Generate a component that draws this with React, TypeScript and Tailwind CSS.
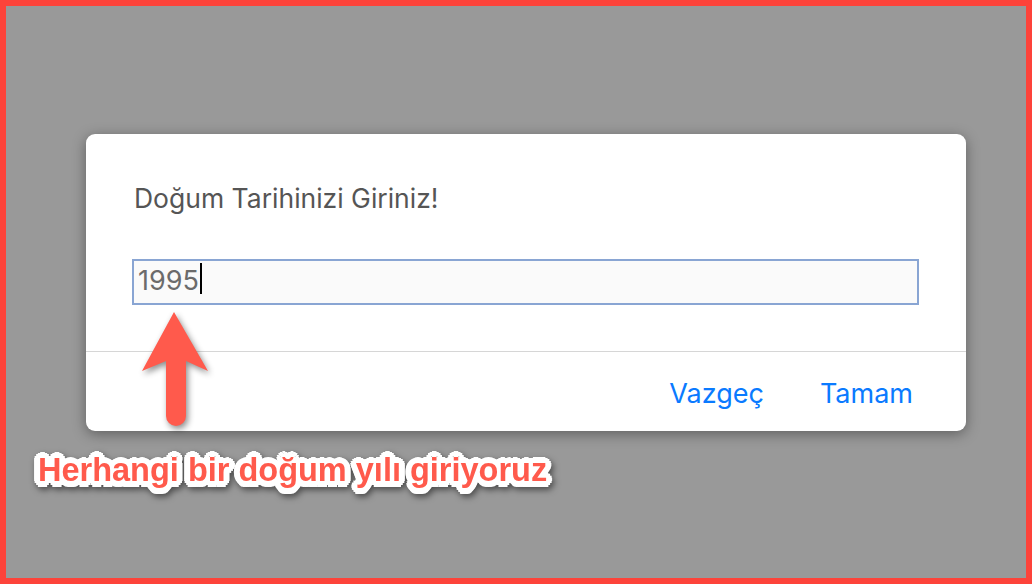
import React from "react";

const Arrow = () => (
  <svg
    className="absolute left-[-6px] top-[-6px] drop-shadow-[2px_3px_3px_rgba(0,0,0,0.45)]"
    width="1032"
    height="584"
    viewBox="0 0 1032 584"
  >
    <path
      d="M174 312 L208 371 L186 361 L186 416 A10 10 0 0 1 166 416 L166 361 L142 371 Z"
      fill="#ff5a4c"
      strokeLinejoin="round"
    />
  </svg>
);

// white rounded outline round the caption, built from text shadows
const outline =
  "[text-shadow:6px_0_0_#fff,-6px_0_0_#fff,0_6px_0_#fff,0_-6px_0_#fff,4px_4px_0_#fff,-4px_4px_0_#fff,4px_-4px_0_#fff,-4px_-4px_0_#fff,5.5px_2.3px_0_#fff,-5.5px_2.3px_0_#fff,5.5px_-2.3px_0_#fff,-5.5px_-2.3px_0_#fff,2.3px_5.5px_0_#fff,-2.3px_5.5px_0_#fff,2.3px_-5.5px_0_#fff,-2.3px_-5.5px_0_#fff,3px_0_0_#fff,-3px_0_0_#fff,0_3px_0_#fff,0_-3px_0_#fff]";

export default function App() {
  return (
    <div className="relative w-[1032px] h-[584px] border-[6px] border-[#fd433a] bg-[#999999] pl-[80px] pt-[128px] font-['Inter',sans-serif]">
      <div className="w-[880px] rounded-[9px] bg-white shadow-[0_3px_14px_rgba(0,0,0,0.38)]">
        <div className="px-[46px] pt-[48px] pb-[46px]">
          <h2 className="ml-[2px] text-[26.5px] leading-[32px] text-[#555555]">Doğum Tarihinizi Giriniz!</h2>
          <div className="mt-[45px] flex h-[46px] w-[787px] items-start border-2 border-[#89a5d3] bg-[#fafafa] px-[4px]">
            <span className="mt-[4px] text-[27px] leading-[32px] text-[#6b6b6b]">1995</span>
            <span className="ml-px mt-[2px] h-[31px] w-[2px] bg-black" />
          </div>
        </div>
        <div className="h-px bg-[#d6d6d6]" />
        <div className="flex h-[79px] items-center justify-end gap-[56px] pr-[53px] pt-[6px]">
          <button className="text-[27px] text-[#0a7aff]">Vazgeç</button>
          <button className="text-[27px] text-[#0a7aff]">Tamam</button>
        </div>
      </div>
      <Arrow />
      <p
        className={`absolute left-[32px] top-[444px] font-['Liberation_Sans',Arial,sans-serif] text-[32.5px] font-bold leading-[40px] text-[#ff5a4c] drop-shadow-[2px_3px_3px_rgba(0,0,0,0.5)] ${outline}`}
      >
        Herhangi bir doğum yılı giriyoruz
      </p>
    </div>
  );
}
